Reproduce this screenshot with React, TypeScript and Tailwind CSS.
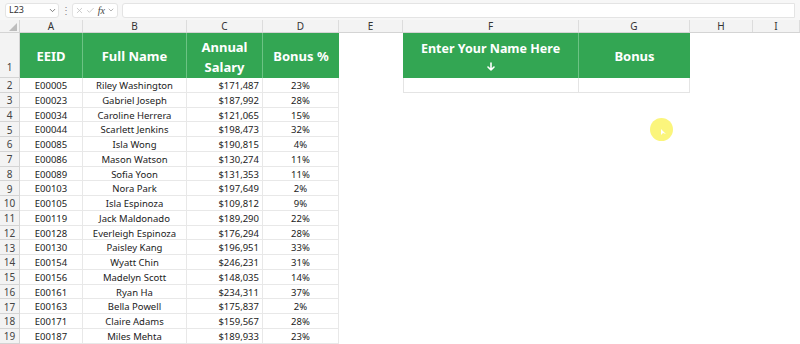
import { ChevronDown, X, Check } from "lucide-react";

type Row = [string, string, string, string];

const rows: Row[] = [
  ["E00005", "Riley Washington", "$171,487", "23%"],
  ["E00023", "Gabriel Joseph", "$187,992", "28%"],
  ["E00034", "Caroline Herrera", "$121,065", "15%"],
  ["E00044", "Scarlett Jenkins", "$198,473", "32%"],
  ["E00085", "Isla Wong", "$190,815", "4%"],
  ["E00086", "Mason Watson", "$130,274", "11%"],
  ["E00089", "Sofia Yoon", "$131,353", "11%"],
  ["E00103", "Nora Park", "$197,649", "2%"],
  ["E00105", "Isla Espinoza", "$109,812", "9%"],
  ["E00119", "Jack Maldonado", "$189,290", "22%"],
  ["E00128", "Everleigh Espinoza", "$176,294", "28%"],
  ["E00130", "Paisley Kang", "$196,951", "33%"],
  ["E00154", "Wyatt Chin", "$246,231", "31%"],
  ["E00156", "Madelyn Scott", "$148,035", "14%"],
  ["E00161", "Ryan Ha", "$234,311", "37%"],
  ["E00163", "Bella Powell", "$175,837", "2%"],
  ["E00171", "Claire Adams", "$159,567", "28%"],
  ["E00187", "Miles Mehta", "$189,933", "23%"],
];

const cols = "grid grid-cols-[20px_63px_104px_76px_76px_64px_176px_111px_63px_1fr]";
const letters = ["A", "B", "C", "D", "E", "F", "G", "H", "I"];

const App = () => {
  return (
    <div className="relative w-[800px] h-[344px] overflow-hidden bg-white text-[#222] font-['Noto_Sans',sans-serif]">
      {/* formula bar */}
      <div className="h-[20px] flex items-center px-[5px] bg-[#f7f7f7]">
        <div className="w-[54px] h-[15px] flex items-center justify-between bg-white border border-[#e4e4e4] rounded-[3px] pl-[3px] pr-[1px]">
          <span className="text-[9px] text-[#333]">L23</span>
          <ChevronDown size={9} className="text-[#555]" />
        </div>
        <span className="text-[10px] text-[#888] leading-none w-[13px] text-center">⋮</span>
        <div className="w-[46px] h-[15px] flex items-center gap-[2px] bg-white border border-[#e4e4e4] rounded-[3px] px-[2px]">
          <X size={9} className="text-[#bbb]" />
          <Check size={9} className="text-[#bbb]" />
          <span className="text-[10px] italic font-['Liberation_Serif',serif] text-[#444] ml-[1px]">fx</span>
          <ChevronDown size={8} className="text-[#888]" />
        </div>
        <div className="flex-1 ml-[4px] h-[15px] bg-white border border-[#e4e4e4] rounded-l-[3px]" />
      </div>

      {/* column headers */}
      <div className={`${cols} h-[13px] bg-[#f3f3f3] border-b border-[#d4d4d4]`}>
        <div className="relative border-r border-[#d4d4d4]">
          <div className="absolute right-[2px] bottom-[1px] w-0 h-0 border-l-[8px] border-l-transparent border-b-[8px] border-b-[#bdbdbd]" />
        </div>
        {letters.map((l) => (
          <div key={l} className="flex items-center justify-center text-[10px] leading-none text-[#333] border-r border-[#dcdcdc]">
            {l}
          </div>
        ))}
      </div>

      {/* row 1 header */}
      <div className={`${cols} h-[45px] text-white font-bold text-[13px]`}>
        <div className="flex items-end justify-center pb-[2px] text-[10px] font-normal text-[#444] bg-[#f3f3f3] border-r border-b border-[#d4d4d4]">1</div>
        <div className="flex items-center justify-center pt-[3px] bg-[#33a653] border-r border-[#6cc384]">EEID</div>
        <div className="flex items-center justify-center pt-[3px] bg-[#33a653] border-r border-[#6cc384]">Full Name</div>
        <div className="flex items-center justify-center pt-[2px] text-center bg-[#33a653] leading-[20px] border-r border-[#6cc384]">
          Annual
          <br />
          Salary
        </div>
        <div className="flex items-center justify-center pt-[3px] bg-[#33a653]">Bonus %</div>
        <div />
        <div className="flex flex-col items-center justify-center gap-[5px] bg-[#33a653] text-[12.5px] leading-[16px] border-r border-[#6cc384]">
          <span>Enter Your Name Here</span>
          <svg width="8" height="9" viewBox="0 0 8 9" fill="none" stroke="white" strokeWidth="1.6" strokeLinecap="round" strokeLinejoin="round">
            <path d="M4 1 V8 M1 5 L4 8 L7 5" />
          </svg>
        </div>
        <div className="flex items-center justify-center pt-[3px] bg-[#33a653]">Bonus</div>
        <div />
        <div />
      </div>

      {/* data rows */}
      {rows.map((r, i) => (
        <div key={r[0]} className={`${cols} h-[14.75px] text-[9.5px] leading-none`}>
          <div className="flex items-center justify-center pt-[1px] text-[10px] text-[#444] bg-[#f3f3f3] border-r border-b border-[#d4d4d4]">{i + 2}</div>
          <div className="flex items-center justify-center pt-[2px] border-r border-b border-[#e8e8e8]">{r[0]}</div>
          <div className="flex items-center justify-center pt-[2px] border-r border-b border-[#e8e8e8]">{r[1]}</div>
          <div className="flex items-center justify-end pt-[2px] pr-[3px] border-r border-b border-[#e8e8e8]">{r[2]}</div>
          <div className="flex items-center justify-center pt-[2px] border-r border-b border-[#e8e8e8]">{r[3]}</div>
          <div />
          <div className={i === 0 ? "border-x border-b border-[#e4e4e4]" : ""} />
          <div className={i === 0 ? "border-r border-b border-[#e4e4e4]" : ""} />
          <div />
          <div />
        </div>
      ))}

      {/* cursor highlight */}
      <div className="absolute left-[650px] top-[118px] w-[23px] h-[23px] rounded-full bg-[#fbf57c]">
        <svg className="absolute left-[10px] top-[10px]" width="8" height="8" viewBox="0 0 8 8">
          <path d="M1 1 L1 7 L3 5 L6 6 Z" fill="white" />
        </svg>
      </div>
    </div>
  );
};

export default App;
